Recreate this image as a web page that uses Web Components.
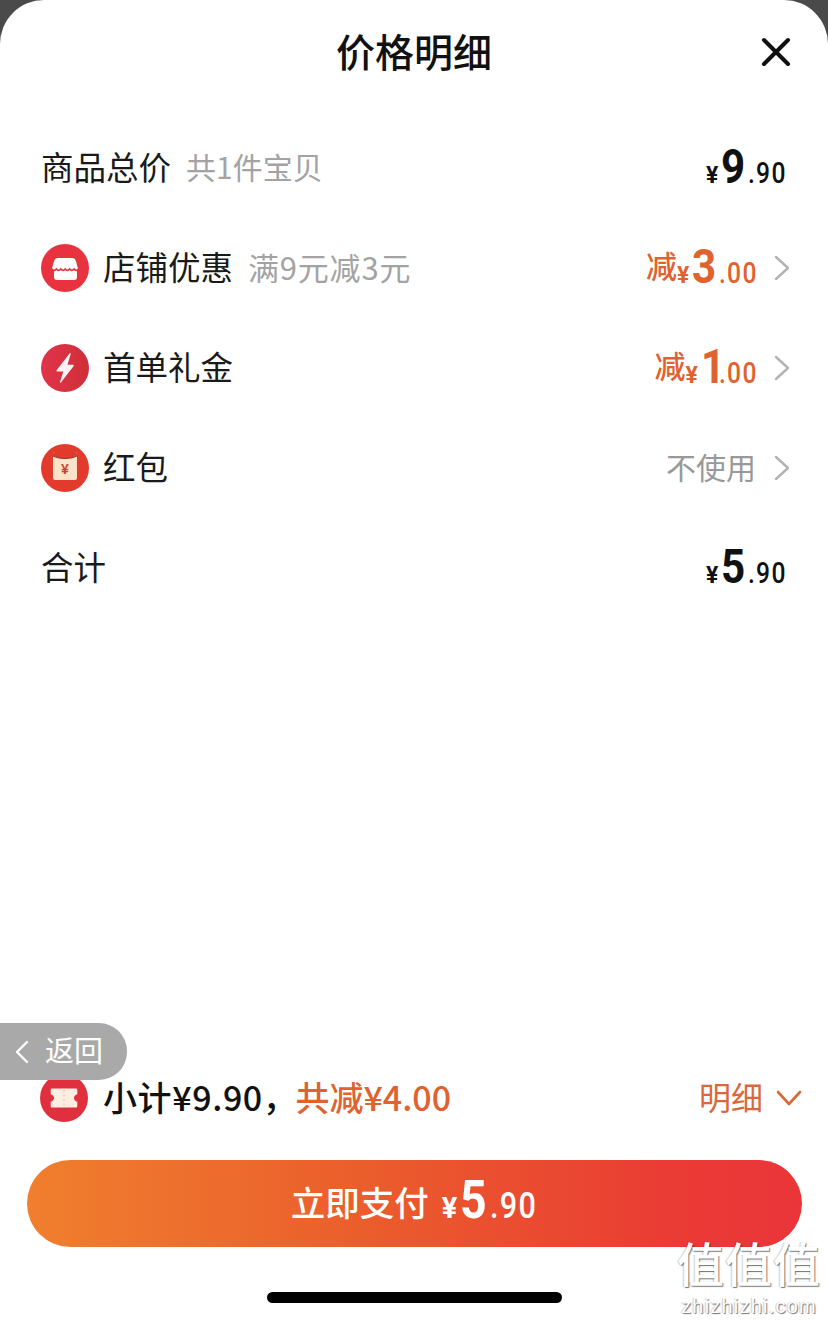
<!DOCTYPE html>
<html lang="zh">
<head>
<meta charset="utf-8">
<title>价格明细</title>
<style>
  html, body { margin: 0; padding: 0; background: #4a4a4a; }
  body {
    width: 828px;
    height: 1320px;
    overflow: hidden;
    font-family: "Noto Sans CJK SC", "Noto Sans", sans-serif;
    color: #111;
  }
</style>
</head>
<body>
<pd-sheet>
  <pd-header slot="top" title="价格明细"></pd-header>

  <pd-row slot="rows" label="商品总价" note="共1件宝贝">
    <pd-price yen int="9" dec="90"></pd-price>
  </pd-row>
  <pd-row slot="rows" label="店铺优惠" note="满9元减3元" link style="--note-size:31px;--note-spacing:.8px">
    <svg slot="icon" viewBox="0 0 48 48" width="48" height="48">
      <circle cx="24" cy="24" r="24" fill="#e8323f"/>
      <path d="M18 14h13c2 0 3.300 1.100 3.900 3l2.100 7.500c.3 1-.3 1.500-1.100 1.500h-23.800c-.8 0-1.400-.5-1.100-1.500l2.100-7.500c.6-1.900 1.900-3 3.900-3z" fill="#fff"/>
      <rect x="13" y="25" width="23" height="11" rx="3" fill="#fff"/>
      <path d="M11 25q2.200 2.800 4.400 0q2.200 2.800 4.400 0q2.200 2.800 4.400 0q2.200 2.800 4.400 0q2.200 2.800 4.400 0q2.200 2.800 4.400 0" fill="none" stroke="#e8323f" stroke-width="1.700"/>
    </svg>
    <pd-price tone="accent" lead="减" yen int="3" dec="00"></pd-price>
  </pd-row>
  <pd-row slot="rows" label="首单礼金" link>
    <svg slot="icon" viewBox="0 0 48 48" width="48" height="48">
      <defs>
        <linearGradient id="boltBg" x1="0" y1="0" x2="1" y2="0">
          <stop offset="0" stop-color="#e0344a"/>
          <stop offset="1" stop-color="#cf2f38"/>
        </linearGradient>
      </defs>
      <circle cx="24" cy="24" r="24" fill="url(#boltBg)"/>
      <path d="M28.500 9.500L15.800 26c-.6.800-.2 1.500.7 1.500h5.800L19 38c-.2.900.4 1 .9.400L32.500 22.300c.6-.8.300-1.500-.7-1.500h-5.300l3.200-10.800c.3-.9-.2-1.200-.7-.5z" fill="#fff" opacity=".94"/>
    </svg>
    <pd-price tone="accent" lead="减" yen int="1" dec="00" style="--int-spacing:-10px;--int-mr:-2.400px"></pd-price>
  </pd-row>
  <pd-row slot="rows" label="红包" link>
    <svg slot="icon" viewBox="0 0 48 48" width="48" height="48">
      <circle cx="24" cy="24" r="24" fill="#e23a2c"/>
      <rect x="12" y="8" width="24" height="28" rx="2" fill="#fae3c9"/>
      <path d="M12 10c0-1.200.8-2 2-2h20c1.200 0 2 .8 2 2v2c-3.500 1.700-7.500 2.500-12 2.500s-8.500-.8-12-2.500z" fill="#e23a2c"/>
      <path d="M12 12c3.500 1.700 7.500 2.500 12 2.500s8.500-.8 12-2.500" fill="none" stroke="#8c3a2c" stroke-width="1"/>
      <text x="24" y="30" text-anchor="middle" font-size="14" font-weight="700" fill="#c9432f" font-family="Liberation Sans, sans-serif">¥</text>
    </svg>
    <pd-plain>不使用</pd-plain>
  </pd-row>
  <pd-row slot="rows" label="合计">
    <pd-price yen int="5" dec="90"></pd-price>
  </pd-row>

  <pd-summary slot="bottom">
    <svg slot="icon" viewBox="0 0 48 48" width="48" height="48">
      <circle cx="24" cy="24" r="24" fill="#e0303e"/>
      <path d="M12 14.500h24c.8 0 1.300.5 1.300 1.300v4.500c-2 .5-3.300 2-3.300 3.700s1.300 3.200 3.300 3.700v4.500c0 .8-.5 1.300-1.300 1.300h-24c-.8 0-1.300-.5-1.300-1.300v-4.500c2-.5 3.300-2 3.300-3.700s-1.300-3.200-3.300-3.700v-4.500c0-.8.5-1.300 1.300-1.300z" fill="#fdeee2"/>
      <path d="M24 16v16" stroke="#f3c9b8" stroke-width="1.500" stroke-dasharray="2 2.500"/>
    </svg>
  </pd-summary>
  <pd-pay-button slot="bottom" label="立即支付" int="5" dec="90"></pd-pay-button>
  <pd-home-bar slot="bottom"></pd-home-bar>

  <pd-back-pill slot="over"></pd-back-pill>
  <pd-watermark slot="over"></pd-watermark>
</pd-sheet>

<script>
const NUM_FONT = '"Roboto", "Liberation Sans", sans-serif';
const CJK_FONT = '"Noto Sans CJK SC", "Noto Sans", sans-serif';

class PdSheet extends HTMLElement {
  constructor() {
    super();
    this.attachShadow({ mode: 'open' });
    this.shadowRoot.innerHTML = `
      <style>
        :host {
          display: flex;
          flex-direction: column;
          position: relative;
          width: 828px;
          height: 1320px;
          background: #fff;
          border-radius: 44px 44px 0 0;
          overflow: hidden;
        }
        .rows { display: flex; flex-direction: column; padding-top: 14px; flex: 1; }
        .bottom { display: flex; flex-direction: column; }
      </style>
      <slot name="top"></slot>
      <div class="rows"><slot name="rows"></slot></div>
      <div class="bottom"><slot name="bottom"></slot></div>
      <slot name="over"></slot>
    `;
  }
}

class PdHeader extends HTMLElement {
  constructor() {
    super();
    this.attachShadow({ mode: 'open' });
    this.shadowRoot.innerHTML = `
      <style>
        :host {
          display: flex;
          align-items: center;
          justify-content: center;
          position: relative;
          height: 104px;
        }
        h1 { margin: 0 0 4px; font-size: 39px; line-height: 1; font-weight: 500; color: #111; }
        svg { position: absolute; right: 37px; top: 37px; }
      </style>
      <h1></h1>
      <svg viewBox="0 0 30 30" width="30" height="30">
        <path d="M3 3L27 27M27 3L3 27" stroke="#111" stroke-width="4" stroke-linecap="round"/>
      </svg>
    `;
    this.shadowRoot.querySelector('h1').textContent = this.getAttribute('title');
  }
}

class PdRow extends HTMLElement {
  constructor() {
    super();
    this.attachShadow({ mode: 'open' });
    this.shadowRoot.innerHTML = `
      <style>
        :host {
          display: flex;
          align-items: center;
          height: 100px;
          padding: 0 38px 0 41px;
        }
        .icon { display: flex; margin-right: 14px; }
        .icon.empty { display: none; }
        .label { font-size: 32.500px; line-height: 1; color: #1a1a1a; margin-bottom: 4px; }
        .note {
          font-size: var(--note-size, 30px);
          letter-spacing: var(--note-spacing, 0);
          line-height: 1;
          color: #a3a3a3;
          margin: 0 0 4px 15px;
        }
        .end { margin-left: auto; display: flex; align-items: center; }
        .chev { margin-left: 15px; display: none; }
        :host([link]) .chev { display: block; }
        :host(:not([link])) .end { margin-right: 2px; }
      </style>
      <span class="icon"><slot name="icon"></slot></span>
      <span class="label"></span>
      <span class="note"></span>
      <span class="end">
        <slot></slot>
        <svg class="chev" viewBox="0 0 16 26" width="16" height="26">
          <path d="M2 2L14 13L2 24" fill="none" stroke="#b3b3b3" stroke-width="2.400" stroke-linecap="round" stroke-linejoin="round"/>
        </svg>
      </span>
    `;
    this.shadowRoot.querySelector('.label').textContent = this.getAttribute('label');
    this.shadowRoot.querySelector('.note').textContent = this.getAttribute('note') || '';
    if (!this.querySelector('[slot=icon]')) {
      this.shadowRoot.querySelector('.icon').classList.add('empty');
    }
  }
}

class PdPlain extends HTMLElement {
  constructor() {
    super();
    this.attachShadow({ mode: 'open' });
    this.shadowRoot.innerHTML = `
      <style>
        :host { display: block; color: #999; font-size: 30px; line-height: 1; margin: 0 3px 5px 0; }
      </style>
      <slot></slot>
    `;
  }
}

class PdPrice extends HTMLElement {
  constructor() {
    super();
    this.attachShadow({ mode: 'open' });
    this.shadowRoot.innerHTML = `
      <style>
        :host {
          display: inline-flex;
          align-items: baseline;
          color: #111;
          font-family: ${NUM_FONT};
          font-weight: 500;
          line-height: 1;
          padding-bottom: 4px;
        }
        :host([tone=accent]) { color: #e0622f; }
        span { display: inline-block; }
        .lead { font-family: ${CJK_FONT}; font-size: 31px; font-weight: 500; transform: translateY(-5px); }
        .yen { font-size: var(--yen-size, 23px); font-weight: 700; margin-right: 3px; }
        .int {
          font-size: var(--int-size, 49px);
          font-weight: 700;
          letter-spacing: var(--int-spacing, 0);
          transform: scaleX(.86);
          transform-origin: left;
          margin-right: var(--int-mr, -4px);
        }
        .dec {
          font-size: var(--dec-size, 29px);
          margin-left: 3px;
          letter-spacing: 1.500px;
          transform: scaleX(.85);
          transform-origin: left;
          margin-right: var(--dec-mr, -6px);
        }
      </style>
      <span class="lead"></span><span class="yen">¥</span><span class="int"></span><span class="dec"></span>
    `;
    this.shadowRoot.querySelector('.lead').textContent = this.getAttribute('lead') || '';
    this.shadowRoot.querySelector('.int').textContent = this.getAttribute('int');
    this.shadowRoot.querySelector('.dec').textContent = '.' + this.getAttribute('dec');
  }
}

class PdSummary extends HTMLElement {
  constructor() {
    super();
    this.attachShadow({ mode: 'open' });
    this.shadowRoot.innerHTML = `
      <style>
        :host {
          display: flex;
          align-items: center;
          height: 76px;
          padding: 0 26px 0 40px;
          margin-bottom: 24px;
        }
        .icon { display: flex; margin-right: 15px; }
        .sub { font-size: 34px; font-weight: 500; color: #111; letter-spacing: .6px; margin-bottom: 4px; }
        .cut { font-size: 34px; font-weight: 500; color: #e0622f; margin: 0 0 4px -2px; }
        .more { margin-left: auto; display: flex; align-items: center; color: #d9693a; font-size: 32px; }
        .more span { margin-bottom: 4px; }
        svg.arrow { margin-left: 13px; }
      </style>
      <span class="icon"><slot name="icon"></slot></span>
      <span class="sub">小计¥9.90，</span>
      <span class="cut">共减¥4.00</span>
      <span class="more"><span>明细</span>
        <svg class="arrow" viewBox="0 0 26 16" width="26" height="16">
          <path d="M2 2L13 14L24 2" fill="none" stroke="#d9693a" stroke-width="2.600" stroke-linecap="round" stroke-linejoin="round"/>
        </svg>
      </span>
    `;
  }
}

class PdPayButton extends HTMLElement {
  constructor() {
    super();
    this.attachShadow({ mode: 'open' });
    this.shadowRoot.innerHTML = `
      <style>
        :host {
          display: flex;
          align-items: center;
          justify-content: center;
          height: 87px;
          margin: 0 26px 0 27px;
          border-radius: 44px;
          background: linear-gradient(90deg, #f07f2e 0%, #ea5c2c 45%, #ea3a35 85%, #ea3539 100%);
          color: #fff;
        }
        .text { display: flex; align-items: baseline; gap: 13px; margin-bottom: 4px; }
        .label { font-size: 34.500px; font-weight: 500; line-height: 1; transform: translateY(-2px); }
        pd-price {
          color: #fff;
          --yen-size: 29px;
          --int-size: 54px;
          --dec-size: 36px;
          --int-mr: -4.500px;
          --dec-mr: -7px;
        }
      </style>
      <span class="text">
        <span class="label">${this.getAttribute('label')}</span>
        <pd-price yen int="${this.getAttribute('int')}" dec="${this.getAttribute('dec')}"></pd-price>
      </span>
    `;
  }
}

class PdHomeBar extends HTMLElement {
  constructor() {
    super();
    this.attachShadow({ mode: 'open' });
    this.shadowRoot.innerHTML = `
      <style>
        :host { display: flex; justify-content: center; padding: 45px 0 17px 1px; }
        div { width: 295px; height: 11px; border-radius: 6px; background: #000; }
      </style>
      <div></div>
    `;
  }
}

class PdBackPill extends HTMLElement {
  constructor() {
    super();
    this.attachShadow({ mode: 'open' });
    this.shadowRoot.innerHTML = `
      <style>
        :host {
          position: absolute;
          left: 0;
          top: 1023px;
          width: 127px;
          height: 57px;
          display: flex;
          align-items: center;
          box-sizing: border-box;
          padding-left: 15px;
          background: #a9a9a9;
          border-radius: 0 28px 28px 0;
          color: #fff;
          font-size: 29px;
        }
        svg { margin-right: 16px; }
        span { margin-bottom: 6px; }
      </style>
      <svg viewBox="0 0 14 24" width="14" height="24">
        <path d="M12 2L2 12L12 22" fill="none" stroke="#fff" stroke-width="2.400" stroke-linecap="round" stroke-linejoin="round"/>
      </svg>
      <span>返回</span>
    `;
  }
}

class PdWatermark extends HTMLElement {
  constructor() {
    super();
    this.attachShadow({ mode: 'open' });
    this.shadowRoot.innerHTML = `
      <style>
        :host {
          position: absolute;
          left: 674px;
          top: 1238px;
          width: 150px;
          display: flex;
          flex-direction: column;
          align-items: center;
          color: #fff;
          text-shadow: 1px 1px 1px rgba(0,0,0,.55), -1px 0 1px rgba(0,0,0,.2);
          line-height: 1;
        }
        .big { font-size: 47px; font-weight: 500; letter-spacing: 1px; white-space: nowrap; }
        .url { font-family: "Liberation Sans", sans-serif; font-size: 20px; letter-spacing: 1.200px; margin-top: 11px; white-space: nowrap; }
      </style>
      <span class="big">值值值</span>
      <span class="url">zhizhizhi.com</span>
    `;
  }
}

customElements.define('pd-sheet', PdSheet);
customElements.define('pd-header', PdHeader);
customElements.define('pd-row', PdRow);
customElements.define('pd-plain', PdPlain);
customElements.define('pd-price', PdPrice);
customElements.define('pd-summary', PdSummary);
customElements.define('pd-pay-button', PdPayButton);
customElements.define('pd-home-bar', PdHomeBar);
customElements.define('pd-back-pill', PdBackPill);
customElements.define('pd-watermark', PdWatermark);
</script>
</body>
</html>
